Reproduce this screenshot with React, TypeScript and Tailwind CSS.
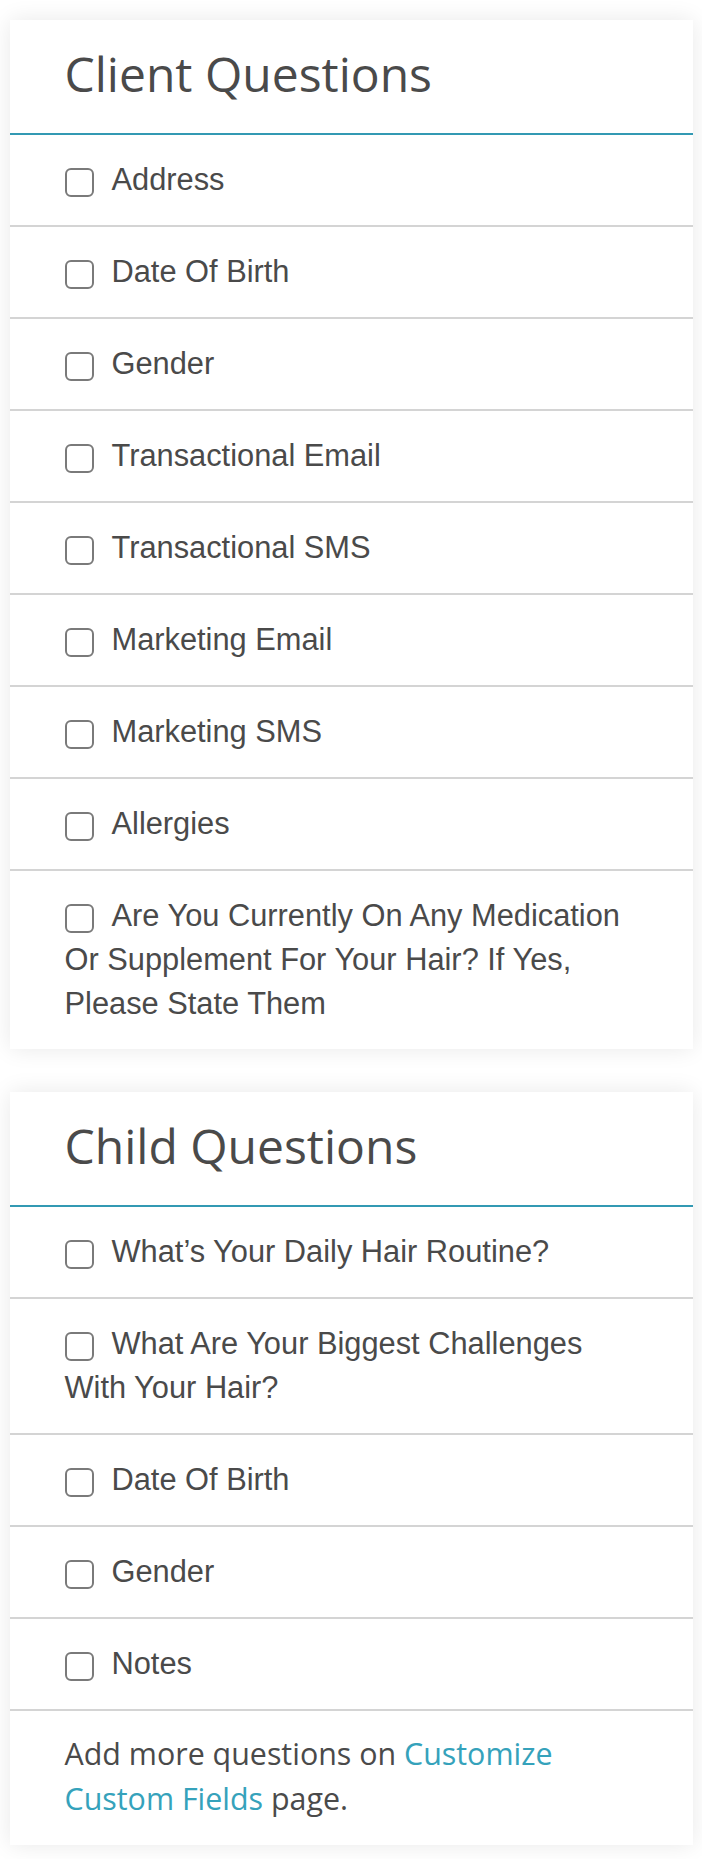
type Section = {
  title: string;
  items: string[];
  footer?: boolean;
};

const sections: Section[] = [
  {
    title: "Client Questions",
    items: [
      "Address",
      "Date Of Birth",
      "Gender",
      "Transactional Email",
      "Transactional SMS",
      "Marketing Email",
      "Marketing SMS",
      "Allergies",
      "Are You Currently On Any Medication Or Supplement For Your Hair? If Yes, Please State Them",
    ],
  },
  {
    title: "Child Questions",
    items: [
      "What\u2019s Your Daily Hair Routine?",
      "What Are Your Biggest Challenges With Your Hair?",
      "Date Of Birth",
      "Gender",
      "Notes",
    ],
    footer: true,
  },
];

function QuestionRow({ label, last }: { label: string; last: boolean }) {
  return (
    <label
      className={
        "block cursor-pointer pl-[55px] pr-[52px] py-[23px] text-[30.8px] leading-[44px] text-[#4a4a4a] " +
        (last ? "" : "border-b-2 border-[#d4d4d4]")
      }
      style={{ fontFamily: '"Liberation Sans", Arial, sans-serif' }}
    >
      <input type="checkbox" className="hidden" />
      <span className="inline-block w-[29px] h-[29px] border-2 border-[#7a7a7a] rounded-[6px] bg-white align-[-7px] mr-[18px]" />
      {label}
    </label>
  );
}

function QuestionCard({ section }: { section: Section }) {
  return (
    <div className="bg-white shadow-[0_0_22px_rgba(0,0,0,0.09)]">
      <div className="h-[115px] pl-[55px] flex items-center border-b-2 border-[#3399b3]">
        <h2
          className="text-[48px] font-normal text-[#4a4a4a] pb-[5px]"
          style={{ fontFamily: '"Open Sans", Lato, sans-serif' }}
        >
          {section.title}
        </h2>
      </div>
      {section.items.map((item, i) => (
        <QuestionRow
          key={item + i}
          label={item}
          last={!section.footer && i === section.items.length - 1}
        />
      ))}
      {section.footer && (
        <p
          className="pl-[55px] pr-[60px] pt-[20px] pb-[24px] text-[30.4px] leading-[45px] text-[#4a4a4a]"
          style={{ fontFamily: '"Open Sans", Lato, sans-serif' }}
        >
          Add more questions on{" "}
          <a href="#" className="text-[#35a2bb]">
            Customize Custom Fields
          </a>{" "}
          page.
        </p>
      )}
    </div>
  );
}

export default function App() {
  return (
    <div className="min-h-[1859px] bg-white px-[9.5px] pt-[20px] pb-[15px] flex flex-col gap-[43px]">
      {sections.map((s) => (
        <QuestionCard key={s.title} section={s} />
      ))}
    </div>
  );
}
